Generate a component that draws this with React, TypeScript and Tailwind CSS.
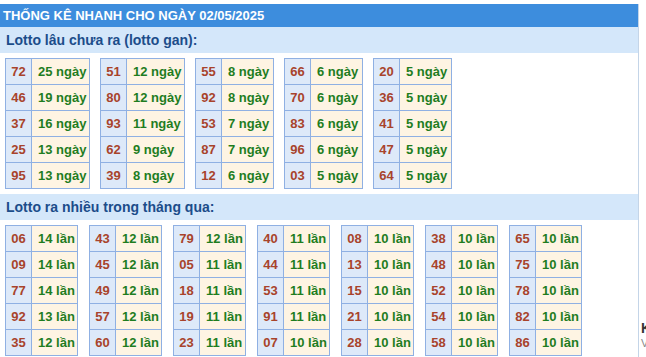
import React from 'react'

type Row = [string, number]

const ganTables: Row[][] = [
  [['72', 25], ['46', 19], ['37', 16], ['25', 13], ['95', 13]],
  [['51', 12], ['80', 12], ['93', 11], ['62', 9], ['39', 8]],
  [['55', 8], ['92', 8], ['53', 7], ['87', 7], ['12', 6]],
  [['66', 6], ['70', 6], ['83', 6], ['96', 6], ['03', 5]],
  [['20', 5], ['36', 5], ['41', 5], ['47', 5], ['64', 5]],
]

const hotTables: Row[][] = [
  [['06', 14], ['09', 14], ['77', 14], ['92', 13], ['35', 12]],
  [['43', 12], ['45', 12], ['49', 12], ['57', 12], ['60', 12]],
  [['79', 12], ['05', 11], ['18', 11], ['19', 11], ['23', 11]],
  [['40', 11], ['44', 11], ['53', 11], ['91', 11], ['07', 10]],
  [['08', 10], ['13', 10], ['15', 10], ['21', 10], ['28', 10]],
  [['38', 10], ['48', 10], ['52', 10], ['54', 10], ['58', 10]],
  [['65', 10], ['75', 10], ['78', 10], ['82', 10], ['86', 10]],
]

function LotoTable({ rows, unit, valueWidth }: { rows: Row[]; unit: string; valueWidth: string }) {
  return (
    <table className="table-fixed border-collapse text-[13px] font-bold">
      <tbody>
        {rows.map(([num, count]) => (
          <tr key={num}>
            <td className="h-[26px] w-[26px] border border-[#8fb0e3] bg-[#dde9f9] p-0 text-center text-[#a8432b]">
              {num}
            </td>
            <td className={`h-[26px] border border-[#8fb0e3] bg-[#fef4e3] p-0 pl-[6px] whitespace-nowrap text-[#1f7d1f] ${valueWidth}`}>
              {count} {unit}
            </td>
          </tr>
        ))}
      </tbody>
    </table>
  )
}

function SubHeader({ children }: { children: React.ReactNode }) {
  return (
    <div className="h-[26px] bg-[#d4e7fa] pl-[6px] text-[14px] leading-[26px] font-bold text-[#1c4d8a]">
      {children}
    </div>
  )
}

export default function App() {
  return (
    <div className="flex h-[357px] overflow-hidden bg-white font-['Liberation_Sans',Arial,sans-serif]">
      <div className="mt-[4px] w-[639px] shrink-0 border-r border-[#c4d5e8]">
        <div className="h-[23px] bg-[#3d8ddd] pl-[3px] text-[13px] leading-[23px] font-bold text-white">
          THỐNG KÊ NHANH CHO NGÀY 02/05/2025
        </div>

        <SubHeader>Lotto lâu chưa ra (lotto gan):</SubHeader>
        <div className="flex gap-[10px] px-[5px] py-[5px]">
          {ganTables.map((rows, i) => (
            <LotoTable key={i} rows={rows} unit="ngày" valueWidth={i < 2 ? 'w-[58px]' : 'w-[52px]'} />
          ))}
        </div>

        <SubHeader>Lotto ra nhiều trong tháng qua:</SubHeader>
        <div className="flex gap-[11px] px-[5px] pt-[5px]">
          {hotTables.map((rows, i) => (
            <LotoTable key={i} rows={rows} unit="lần" valueWidth="w-[46px]" />
          ))}
        </div>
      </div>

      {/* cut-off neighbouring column */}
      <div className="w-[7px] shrink-0 overflow-hidden pl-[2px] pt-[320px] whitespace-nowrap">
        <div className="text-[14px] leading-[16px] font-bold text-[#333]">Kết quả</div>
        <div className="text-[11px] leading-[14px] text-[#888]">Vé số</div>
      </div>
    </div>
  )
}
